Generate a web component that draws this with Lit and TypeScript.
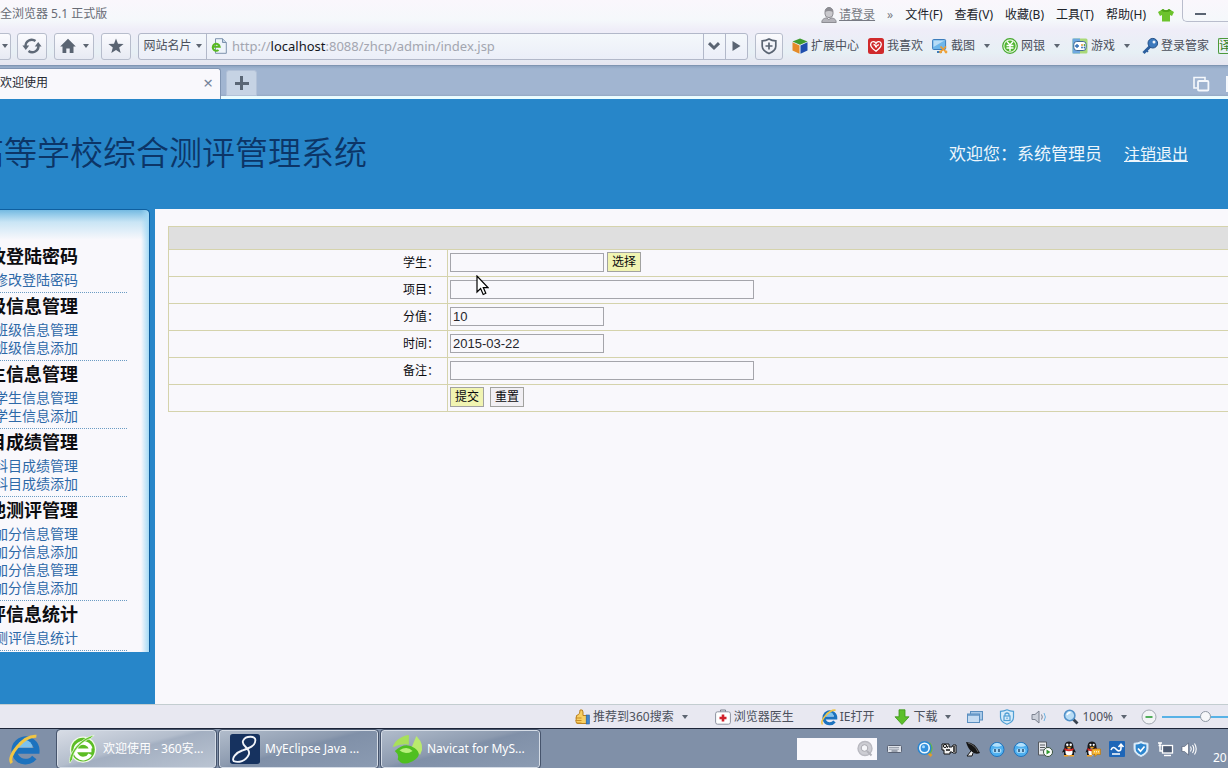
import { LitElement, html, css, svg, nothing } from "lit";
import { customElement, property } from "lit/decorators.js";

type Shape = ReturnType<typeof svg>;

const shapes: Record<string, Shape> = {
  user: svg`<path d="M4 5a4 4.6 0 0 1 8 0v2a4 3.6 0 0 1-8 0z" fill="#c9c9cd" stroke="#8d8d93"/><path d="M4 5q0-4.5 4-4.5T12 5q-4-2-8 0z" fill="#8d8d93"/><path d="M.8 15.5c0-3.6 3-4.5 5-4.5l2 1.6L10 11c2.400 0 5.200 1 5.200 4.500z" fill="#b4b4ba" stroke="#8d8d93"/>`,
  shirt: svg`<path d="M5 2q3 2.500 6 0l5 3-2 4-2-1v6.500H4V8L2 9 0 5z" fill="#6cc32c"/><path d="M5 2q3 2.500 6 0l2 1.400q-5 3.400-10 0z" fill="#4ea318"/>`,
  refresh: svg`<g fill="none" stroke="#5f6977" stroke-width="2.400"><path d="M1.600 8.500A6.200 6.200 0 0 1 11.500 3"/><path d="M14.400 7.500A6.200 6.200 0 0 1 4.500 13"/></g><path d="M-1.600 7.400h6.800L1.800 12zM10.800 8.600h6.800L14.200 4z" fill="#5f6977"/>`,
  home: svg`<path d="M8 .8 15.800 8.600h-2.300V15H9.700v-4.600H6.300V15H2.500V8.600H.2z" fill="#5a6472"/>`,
  star: svg`<path d="M8 .6l2 5.200 5.600.3-4.400 3.500 1.500 5.400L8 11.900 3.300 15l1.500-5.400L.4 6.100 6 5.800z" fill="#5a6472"/>`,
  page: svg`<path d="M4.500.7h7l3.800 3.800v10.800H4.500z" fill="#eef4fa" stroke="#7d93ad"/><path d="M11.500.7v3.800h3.800" fill="#c4d4e6" stroke="#7d93ad"/><path d="M1.700 8.800h7A3.500 3.500 0 1 0 7.500 12" fill="none" stroke="#58b822" stroke-width="2"/>`,
  down: svg`<path d="M3 5.200 8 10l5-4.800" fill="none" stroke="#5a6472" stroke-width="3"/>`,
  play: svg`<path d="M4.500 3v10L12.500 8z" fill="#5a6472"/>`,
  shield: svg`<path d="M8 .9Q11 2.700 14.800 2.800v5.400q0 4.400-6.800 7.300-6.800-2.900-6.800-7.300V2.800Q5 2.700 8 .9z" fill="none" stroke="#5a6472" stroke-width="1.700"/><path d="M8 4.500v7M4.500 8h7" stroke="#5a6472" stroke-width="1.700"/>`,
  cube: svg`<path d="M8 .4 15.500 3.400 8 6.800.5 3.400z" fill="#3f9b2f"/><path d="M.5 4.300 7.500 7.500v8.300L.5 12.400z" fill="#e58b27"/><path d="M8.500 7.500l7-3.200v8.100l-7 3.400z" fill="#1f4fae"/>`,
  heart: svg`<rect width="16" height="16" rx="2.500" fill="#d02a2c"/><path d="M8 13.300C2 9.200 2 7 3 5s4-1.800 5 .4C9 3.200 12 3 13 5s.5 4-5 8.300zM5.500 6.500q2 0 2.500 3 1-3 3-2.500" fill="none" stroke="#fff" stroke-width="1.300"/>`,
  capture: svg`<rect x=".6" y="1.500" width="13" height="10" rx="1" fill="#6db6ea" stroke="#3c7cbc"/><path d="M1.500 9 12.500 2.500H1.500z" fill="#b8dcf6"/><path d="M5 14h5" stroke="#3c7cbc" stroke-width="2"/><path d="M8.500 8.500 14 14M14 8.500 8.500 14" stroke="#ef9b2b" stroke-width="1.600"/><circle cx="8.600" cy="14" r="1.400" fill="#f0a33a"/><circle cx="14" cy="14" r="1.400" fill="#f0a33a"/>`,
  yen: svg`<circle cx="8" cy="8" r="7.300" fill="#e9f8e0" stroke="#46a82e" stroke-width="1.200"/><circle cx="8" cy="8" r="5.600" fill="#4fb52f"/><path d="M5 3.500 8 7l3-3.500M4.500 7.500h7M4.500 10h7M8 7v6" fill="none" stroke="#fff" stroke-width="1.400"/>`,
  game: svg`<rect x=".5" y=".5" width="15" height="15" rx="1.500" fill="#a9d978"/><path d="M.5.500h7.500v15H.5z" fill="#6da8e0"/><rect x="1.800" y="3.500" width="12.400" height="9" rx="3" fill="#fff" stroke="#426a94"/><path d="M3 8h4M5 6v4" stroke="#2e6db5" stroke-width="1.300"/><circle cx="10" cy="7" r=".9" fill="#e08b2b"/><circle cx="12.500" cy="7" r=".9" fill="#4da32e"/><circle cx="10" cy="9.500" r=".9" fill="#2e6db5"/><circle cx="12.500" cy="9.500" r=".9" fill="#2e6db5"/>`,
  key: svg`<path d="M9 7.500 1.500 15" stroke="#2c5f9e" stroke-width="3"/><path d="M3.500 11.500l2.500 2.500" stroke="#2c5f9e" stroke-width="1.600"/><circle cx="10.800" cy="5.200" r="4.800" fill="#3b79bd" stroke="#234f87"/><circle cx="12" cy="4" r="1.500" fill="#eef3fa"/>`,
  copy: svg`<path d="M4 12H1V1.500h11V4" fill="none" stroke="#f5f8fc" stroke-width="1.600"/><rect x="5" y="5" width="10.400" height="9.500" rx="1" fill="none" stroke="#f5f8fc" stroke-width="1.800"/>`,
  thumb: svg`<path d="M2.500 6.500C5 6 6 4 6 1q3-1 3 2v3.500h4v8H4q-2 0-2-2z" fill="#f8cf62" stroke="#b98020"/><path d="M1.500 9h6M1.500 11.500h6M2.500 14h5" stroke="#c88d26"/><rect x="12.200" y="6" width="3.200" height="9" fill="#3f86cf" stroke="#2d5f9b" stroke-width=".6"/>`,
  medic: svg`<path d="M5.500 3V1h5v2" fill="none" stroke="#777c88"/><rect x=".6" y="2.800" width="14.800" height="12.400" rx="2" fill="#fff" stroke="#8d92a0"/><path d="M8 5.500v7M4.500 9h7" stroke="#d0202a" stroke-width="2.600"/>`,
  ie: svg`<path d="M3.600 9h11.200A6 6 0 1 0 13.500 12.500" fill="none" stroke="#1c72be" stroke-width="3"/><path d="M4.500 7.200a4 4 0 0 1 8 0z" fill="#7dc2ee"/><path d="M1.500 15.500C-1.500 12 8 .5 14.600 1.200" fill="none" stroke="#f1c544" stroke-width="1.600"/>`,
  arrow: svg`<path d="M5 .8h6v7h4L8 15.500 1 7.800h4z" fill="#5cbf2a" stroke="#3b9416" stroke-width=".8"/>`,
  windows: svg`<rect x="3.500" y="2.500" width="12" height="8.500" fill="#a9c9e8" stroke="#5b8fc0"/><rect x=".5" y="5" width="12" height="8.500" fill="#c6dcf2" stroke="#5b8fc0"/><path d="M.5 6h12" stroke="#5b8fc0" stroke-width="1.400"/>`,
  lock: svg`<path d="M8 .8q3 1.500 6.500 1.500v6q0 4.500-6.500 7-6.500-2.500-6.500-7v-6Q5 2.300 8 .8z" fill="#d7ecfa" stroke="#4f9fd4" stroke-width="1.200"/><rect x="5" y="7" width="6" height="4.500" fill="none" stroke="#4f9fd4" stroke-width="1.200"/><path d="M6 7V5q2-2 4 0v2M8 8.500v1.500" fill="none" stroke="#4f9fd4" stroke-width="1.200"/>`,
  sound: svg`<path d="M1 5.500h3L8 2v12L4 10.500H1z" fill="#ccd0da" stroke="#7d8290"/><path d="M10.500 5.500q1.600 2.500 0 5" fill="none" stroke="#7d8290"/><path d="M13 4q2.800 4 0 8" fill="none" stroke="#6cb2e2"/>`,
  zoom: svg`<path d="M10 10l4.500 4.500" stroke="#39424f" stroke-width="2.800"/><circle cx="6.700" cy="6.500" r="5.200" fill="#b8dcf5" stroke="#5291c9" stroke-width="1.600"/><path d="M4 6q1-2.500 3.500-2.500" fill="none" stroke="#fff" stroke-width="1.400"/>`,
  minus: svg`<circle cx="8" cy="8" r="7" fill="#f2f4f6" stroke="#a2a9b2"/><path d="M4.500 8h7" stroke="#3fa64a" stroke-width="1.800"/>`,
  keyboard: svg`<rect x=".5" y="4.500" width="14" height="7" rx="1" fill="#dfe3ea" stroke="#596274"/><path d="M2.500 6.500h10M2.500 8.200h10" stroke="#596274" stroke-dasharray="1 1"/><path d="M4.500 10h6" stroke="#596274"/>`,
  finder: svg`<path d="M10.500 11l4 4" stroke="#e49a2d" stroke-width="2.600"/><path d="M12 2q4.500 5 .5 10" fill="none" stroke="#6abf35" stroke-width="2.400"/><circle cx="7.500" cy="7" r="6.300" fill="#f2faff" stroke="#2b86d0" stroke-width="1.600"/><circle cx="7.500" cy="7" r="3.900" fill="#3291de"/><circle cx="6.500" cy="5.800" r="1.500" fill="#a9dafa"/>`,
  camera: svg`<path d="M1 3h7v3h3l1-2h3v8h-3l-1-1H9v2H3V9H1z" fill="#f4f4f4" stroke="#111"/><circle cx="4" cy="5" r="1.600" fill="#f4f4f4" stroke="#111"/><path d="M5 9h4M13 5v6M6 6h1" stroke="#111" stroke-width="1.500"/>`,
  dish: svg`<path d="M1 1q9 0 14 11-4 2-8-1Q3 8 1 1z" fill="#151515"/><path d="M3 2q7 2 10 9" stroke="#666" fill="none"/><path d="M6 10l-4 5h5l1-3" fill="#eee" stroke="#151515"/>`,
  face: svg`<circle cx="8" cy="8.500" r="7" fill="#4fb0ef" stroke="#1f73bd"/><path d="M3 4.500Q8-1 13 4.500 8 7 3 4.500z" fill="#b3e0fb"/><rect x="3.500" y="7.500" width="9" height="4.500" rx="2.200" fill="#a6dafa"/><path d="M6 8v3M10 8v3" stroke="#12375e" stroke-width="1.300"/>`,
  server: svg`<path d="M1.500 1h8v13h-8z" fill="#e7e9ec" stroke="#55595f"/><path d="M3 4h5M3 6.500h5M3 9h5" stroke="#55595f"/><circle cx="11" cy="11" r="4.500" fill="#fff" stroke="#36513a"/><path d="M9.500 8.500v5l4-2.500z" fill="#2e9b2f"/>`,
  penguin: svg`<path d="M8 .5c4 0 4.500 4 4.500 6l2.500 5-2-.5v3H3v-3l-2 .5 2.500-5C3.500 4 4 .5 8 .5z" fill="#16181c"/><ellipse cx="8" cy="11" rx="3.600" ry="3.500" fill="#fff"/><path d="M3.500 7q4.500 2.600 9 0v2q-4.500 2.400-9 0z" fill="#d92a25"/><circle cx="6.300" cy="3.800" r="1.200" fill="#fff"/><circle cx="9.700" cy="3.800" r="1.200" fill="#fff"/><path d="M5 5.800h6L8 7.400zM3 14h4.500v1.500H3zM8.500 14H13v1.500H8.500z" fill="#f2a022"/>`,
  chat: svg`<path d="M7 .5c4 0 4.500 4 4.500 6l2 5-2-.5v3H2v-3l-1.500.5 2-5C2.500 4 3 .5 7 .5z" fill="#16181c"/><ellipse cx="6.500" cy="11" rx="3.200" ry="3.500" fill="#fff"/><path d="M2.500 7q4.500 2.600 9 0v2q-4.500 2.400-9 0z" fill="#d92a25"/><circle cx="5.500" cy="3.800" r="1.100" fill="#fff"/><circle cx="8.700" cy="3.800" r="1.100" fill="#fff"/><path d="M4 5.800h6L7 7.400zM2 14h5v1.500H2z" fill="#f2a022"/><path d="M7 8h8.500v5.500H12l-2 2v-2H7z" fill="#f7b733" stroke="#b87612" stroke-width=".7"/><path d="M9 10.800h5" stroke="#fff" stroke-dasharray="1 1"/>`,
  wave: svg`<rect width="16" height="16" rx="1" fill="#1e66b8"/><path d="M2 9c1.500-4 4-2.500 5.500-.5S12 10.500 12 7V3.500M9.500 6 12 3.200 14.500 6M3 13h8" fill="none" stroke="#fff" stroke-width="1.600"/>`,
  guard: svg`<path d="M8 .6q3.500 1.700 7 1.700v5.500q0 5-7 7.700-7-2.700-7-7.700V2.300Q4.500 2.300 8 .6z" fill="#e8f4fd" stroke="#cfe3f4"/><path d="M8 2.200q2.600 1.300 5.400 1.400v4.200q0 4-5.400 6.200-5.400-2.200-5.400-6.200V3.600Q5.400 3.500 8 2.200z" fill="#2d86cf"/><path d="M5 7.500l2.500 2.700L11.500 5.500" fill="none" stroke="#fff" stroke-width="1.700"/>`,
  network: svg`<path d="M1 2h4M3 2v8h3M1.500 4.500h3" fill="none" stroke="#fff" stroke-width="1.400"/><rect x="5.500" y="4.500" width="10" height="7.500" fill="#4f5d74" stroke="#fff" stroke-width="1.300"/><path d="M7 14.500h7" stroke="#fff" stroke-width="1.400"/>`,
  volume: svg`<path d="M1 5.500h2.500L7.500 2v12l-4-3.500H1z" fill="#fff" stroke="#4a566b" stroke-width=".6"/><path d="M9.500 5.500q1.600 2.500 0 5M11.500 4q2.600 4 0 8M13.500 2.500q3.400 5.500 0 11" fill="none" stroke="#fff" stroke-width="1.100"/>`,
  search: svg`<circle cx="8" cy="7.500" r="7" fill="#cdcdd3" stroke="#b9b9c0" stroke-width="1.400"/><circle cx="7.500" cy="7" r="3.300" fill="#f6f6f9" stroke="#a9a9b0"/><path d="M10 10l4.500 4.500" stroke="#b2b2b9" stroke-width="2"/>`,
  browser: svg`<circle cx="8" cy="8.300" r="7" fill="#f2fbe9"/><circle cx="8" cy="8.300" r="6.300" fill="#5cbd25"/><path d="M4.300 8.700h8.200M11.800 10.800A4.200 4.200 0 1 1 12.100 7.800" fill="none" stroke="#fff" stroke-width="2"/><path d="M1 15.500C-.5 11 7 1.500 14 .7L12 2.400C8 3.500 2.500 9 2.400 13.500z" fill="#62c42b" stroke="#eefbe4" stroke-width=".4"/>`,
  eclipse: svg`<rect width="16" height="16" rx="1.500" fill="#16325f"/><path d="M13.500 3.500C14 1 8.500.6 7 3.500s4.500 4 3 7.500-5.500 4.500-8 3.500C.8 13 3 10 6.500 8.800S13.500 6.500 13.500 3.500z" fill="none" stroke="#f2f5fa"/>`,
  navicat: svg`<path d="M.3 7C2 2.500 6 .8 9 .5v5.200Q5 5 .3 7z" fill="#a8e05a"/><path d="M13 1q5 5 2 10L10.500 7z" fill="#b9ea6d"/><path d="M1.500 9Q7 3.800 12 7.500T11 14.500Q5.500 17.500 3 13.500 4 11 1.500 9z" fill="#4fbf1f"/><path d="M4 8.700q4-2.500 7 .3-4 2.500-7-.3z" fill="#b7f07c"/>`,
};

@customElement("ui-icon")
class UiIcon extends LitElement {
  static styles = css`
    :host { display: inline-flex; flex: none; width: 16px; height: 16px; }
    :host([size="large"]) { width: 30px; height: 30px; }
    .art { width: 100%; height: 100%; overflow: visible; }
  `;
  @property() name = "";
  render() {
    return html`<svg class="art" viewBox="0 0 16 16" aria-hidden="true">${shapes[this.name]}</svg>`;
  }
}

const menus = ["文件(F)", "查看(V)", "收藏(B)", "工具(T)", "帮助(H)"];

const extensions = [
  { icon: "cube", label: "扩展中心", more: false },
  { icon: "heart", label: "我喜欢", more: false },
  { icon: "capture", label: "截图", more: true },
  { icon: "yen", label: "网银", more: true },
  { icon: "game", label: "游戏", more: true },
  { icon: "key", label: "登录管家", more: false },
];

const groups = [
  { title: "修改登陆密码", links: ["修改登陆密码"] },
  { title: "班级信息管理", links: ["班级信息管理", "班级信息添加"] },
  { title: "学生信息管理", links: ["学生信息管理", "学生信息添加"] },
  { title: "科目成绩管理", links: ["科目成绩管理", "科目成绩添加"] },
  { title: "其他测评管理", links: ["加分信息管理", "加分信息添加", "加分信息管理", "加分信息添加"] },
  { title: "测评信息统计", links: ["测评信息统计"] },
];

const fields = [
  { id: "student", label: "学生：", value: "", wide: false, pick: true },
  { id: "project", label: "项目：", value: "", wide: true, pick: false },
  { id: "score", label: "分值：", value: "10", wide: false, pick: false },
  { id: "date", label: "时间：", value: "2015-03-22", wide: false, pick: false },
  { id: "remark", label: "备注：", value: "", wide: true, pick: false },
];

const tasks = [
  { icon: "browser", label: "欢迎使用 - 360安...", active: true },
  { icon: "eclipse", label: "MyEclipse Java ...", active: false },
  { icon: "navicat", label: "Navicat for MyS...", active: false },
];

const tray = ["finder", "camera", "dish", "face", "face", "server", "penguin", "chat", "wave", "guard", "network", "volume"];

@customElement("app-root")
class AppRoot extends LitElement {
  static styles = css`
    :host {
      display: flex; flex-direction: column; height: 100vh; min-height: 700px; position: relative; overflow: hidden;
      font: 12px/18px "Noto Sans", "Noto Sans CJK SC", sans-serif; color: #4b505c; background: #f9f8fc; white-space: nowrap;
    }
    * { box-sizing: border-box; }
    button { font: inherit; color: inherit; background: none; border: 0; padding: 0; margin: 0; display: inline-flex; align-items: center; justify-content: center; white-space: nowrap; }
    a { color: inherit; }
    .caret { border: 3px solid transparent; border-top: 4px solid #5d6571; border-bottom: 0; flex: none; }

    .chrome { flex: none; height: 66px; background: linear-gradient(#faf7fc, #f5f8fb 20px, #efedf8 30px, #e7f0f5 52px, #e6e5f0); border-bottom: 1px solid #7f95b2; }
    .titlebar { height: 28px; display: flex; align-items: flex-start; justify-content: space-between; }
    .caption { line-height: 28px; color: #686b75; }
    .menus { display: flex; align-items: center; gap: 12px; height: 30px; color: #20232a; }
    .login { display: flex; align-items: center; gap: 2px; color: #777a83; }
    .more { color: #777a83; }
    .minimize { width: 46px; height: 22px; margin-left: -4px; align-self: flex-start; border: 1px solid #b9bdcc; border-top: 0; border-right: 0; border-radius: 0 0 0 5px; justify-content: flex-start; padding-left: 12px; }
    .minimize::after { content: ""; width: 11px; height: 2px; margin-top: 6px; background: #5a6472; }

    .toolbar { display: flex; align-items: center; gap: 7px; height: 36px; }
    .tool { height: 27px; width: 30px; border: 1px solid #b7bdcc; border-radius: 3px; background: linear-gradient(#fbfbfe, #e7eaf3); }
    .tool.stub { width: 11px; border-left: 0; border-radius: 0 3px 3px 0; margin-right: -1px; }
    .tool.home { width: 40px; gap: 7px; }
    .tool.safe { width: 28px; }
    .address { flex: 1; min-width: 0; height: 27px; display: flex; border: 1px solid #b2b8c9; border-radius: 3px; background: linear-gradient(#f4f8fb, #ebeef8); }
    .card { width: 68px; gap: 4px; border-right: 1px solid #b2b8c9; flex: none; }
    .place { flex: 1; min-width: 0; display: flex; align-items: center; gap: 5px; padding-left: 4px; font-size: 13px; color: #a3a6b0; }
    .host { color: #15171c; }
    .step { width: 22px; border-left: 1px solid #b2b8c9; }
    .extensions { flex: none; display: flex; align-items: center; gap: 9px; margin-left: 2px; }
    .extension { gap: 3px; }
    .extension .caret { margin: 0 3px 0 6px; }
    .translate { width: 10px; height: 16px; overflow: hidden; border: 1px solid #4c9a3c; border-right: 0; border-radius: 2px 0 0 2px; color: #2f7f24; justify-content: flex-start; }

    .tabs { flex: none; height: 33px; display: flex; align-items: flex-end; background: linear-gradient(#8fa5c2, #a1b5d1 3px, #a1b5d1 28px, #94a8c3 30px, #eafcff 30px); padding-bottom: 3px; }
    .tab { width: 221px; height: 31px; margin-bottom: -3px; display: flex; align-items: center; justify-content: space-between; padding-right: 7px; padding-bottom: 2px; background: #f9f8fc; border: 1px solid #8095b3; border-left: 0; border-bottom: 0; border-radius: 0 3px 0 0; color: #262a33; }
    .close { font-size: 17px; color: #75839a; line-height: 14px; }
    .add { width: 31px; height: 26px; margin-left: 5px; border: 1px solid #b3c2d8; border-radius: 3px 3px 0 0; background: #c6d3e4; }
    .plus { width: 14px; height: 14px; background: linear-gradient(#5a6675, #5a6675) center / 14px 3px no-repeat, linear-gradient(#5a6675, #5a6675) center / 3px 14px no-repeat; }
    .tabtools { margin: 0 0 4px auto; display: flex; gap: 17px; }
    .edge { width: 2px; height: 16px; background: #f5f8fc; }

    .banner { flex: none; height: 110px; background: #2786c9; display: flex; align-items: center; justify-content: space-between; padding: 0 40px 3px 0; font-family: "Noto Sans CJK SC", sans-serif; color: #eef6fc; }
    .brand { width: 367px; display: flex; justify-content: flex-end; margin: 0; padding-bottom: 4px; font-size: 33px; line-height: 40px; font-weight: 350; color: #0c3567; overflow: hidden; }
    .brandname { flex: none; }
    .session { display: flex; gap: 22px; font-size: 17px; line-height: 24px; }
    .logout { font-size: 16px; }

    .body { flex: 1; min-height: 0; display: flex; background: #2786c9; }
    .side { flex: none; width: 150px; margin-right: 5px; align-self: flex-start; overflow: hidden; padding-top: 33px; padding-bottom: 1px; border: 1px solid #0f5f9f; border-left: 0; border-bottom: 0; border-radius: 0 5px 0 0;
      background: linear-gradient(to right, #f9f8fc00 141px, #a4daf5 149px), linear-gradient(#74bae2, #c9e5f5 12px, #f9f8fc 30px); }
    .group { width: 127px; border-bottom: 1px dotted #6b9cc4; padding: 0 49px 4px 0; display: flex; flex-direction: column; align-items: flex-end; font-family: "Noto Sans CJK SC", sans-serif; }
    .grouptitle { margin: 0 0 3px; font-size: 18px; line-height: 24px; color: #0c0c10; font-weight: 700; }
    .link { font-size: 14px; line-height: 18px; color: #2e69a8; text-decoration: none; }

    .content { flex: 1; min-width: 0; background: #f9f8fc; padding: 17px 0 0 13px; }
    .sheet { width: 100%; border-collapse: collapse; table-layout: fixed; color: #0b0b0f; font: 12px/18px "Noto Sans CJK SC", sans-serif; }
    .sheet td, .sheet th { border: 1px solid #d5d3ac; border-right: 0; height: 27px; padding: 0 2px 2px; text-align: left; font-weight: 400; }
    .sheet .head { height: 23px; background: #dfdfdf; }
    .sheet .name { width: 279px; text-align: right; padding-right: 8px; }
    .line { display: flex; align-items: center; gap: 3px; }
    .line.actions { gap: 6px; }
    .text { width: 154px; height: 19px; border: 1px solid #a5a5ab; border-radius: 0; background: transparent; padding: 0 2px; margin: 0; font: 13px/16px "Liberation Sans", sans-serif; color: #26262c; outline: 0; }
    .text.wide { width: 304px; }
    .push { width: 34px; height: 20px; border: 1px solid #a2a2a0; background: #f1f4b2; padding-bottom: 2px; }
    .push.plain { background: #f1eff3; }

    .status { flex: none; height: 24px; display: flex; align-items: center; justify-content: flex-end; gap: 16px; background: #e8e8f1; border-top: 1px solid #c3cdd0; }
    .item { gap: 3px; }
    .item .caret { margin-left: 5px; }
    .item.spaced { margin-right: 11px; }
    .item.near { margin-right: 4px; }
    .zoomer { flex: none; width: 87px; display: flex; align-items: center; gap: 5px; overflow: hidden; margin-left: -2px; }
    .range { appearance: none; flex: none; width: 86px; height: 14px; margin: 0; background: linear-gradient(#58b2e6, #58b2e6) center / 100% 2px no-repeat; }
    .range::-webkit-slider-thumb { appearance: none; width: 11px; height: 11px; border-radius: 50%; background: #f6f7f9; border: 1px solid #8f98a4; }

    .taskbar { flex: none; height: 40px; display: flex; align-items: center; background: #8090a8; border-top: 1px solid #1c2438; color: #fff; }
    .launch { width: 57px; height: 38px; padding-right: 9px; }
    .tasks { display: flex; gap: 3px; }
    .task { width: 159px; height: 38px; justify-content: flex-start; gap: 5px; padding-left: 10px; border: 1px solid #d5dce6; outline: 1px solid #46546c; outline-offset: 0; border-radius: 3px; background: linear-gradient(165deg, #b1bccb, #8c9aaf 45%, #8090a8 50%, #8b9bb2); color: #fff; }
    .task.active { background: linear-gradient(165deg, #d7dce5, #b3bdcc 45%, #a3afc1 50%, #bac4d2); }
    .search { margin-left: auto; width: 80px; height: 22px; display: flex; align-items: center; background: #f9f8fc; padding-right: 4px; }
    .query { flex: 1; min-width: 0; border: 0; background: none; outline: 0; padding: 0 4px; font: inherit; }
    .tray { display: flex; align-items: center; gap: 8px; margin-left: 10px; }
    .tray .first { margin-right: 6px; }
    .clock { align-self: flex-end; margin-left: 16px; width: 15px; overflow: hidden; line-height: 20px; }

    .pointer { position: absolute; left: 476px; top: 275px; width: 13px; height: 21px; pointer-events: none; }
  `;

  render() {
    return html`
      <header class="chrome">
        <div class="titlebar">
          <span class="caption">全浏览器 5.1 正式版</span>
          <nav class="menus">
            <a class="login" href="#"><ui-icon name="user"></ui-icon>请登录</a>
            <span class="more">»</span>
            ${menus.map((m) => html`<button>${m}</button>`)}
            <ui-icon name="shirt"></ui-icon>
            <button class="minimize" aria-label="最小化"></button>
          </nav>
        </div>
        <div class="toolbar">
          <button class="tool stub" aria-label="前进"><span class="caret"></span></button>
          <button class="tool" aria-label="刷新"><ui-icon name="refresh"></ui-icon></button>
          <button class="tool home" aria-label="主页"><ui-icon name="home"></ui-icon><span class="caret"></span></button>
          <button class="tool" aria-label="收藏"><ui-icon name="star"></ui-icon></button>
          <div class="address">
            <button class="card">网站名片<span class="caret"></span></button>
            <div class="place"><ui-icon name="page"></ui-icon><span>http://<span class="host">localhost</span>:8088/zhcp/admin/index.jsp</span></div>
            <button class="step" aria-label="历史"><ui-icon name="down"></ui-icon></button>
            <button class="step" aria-label="转到"><ui-icon name="play"></ui-icon></button>
          </div>
          <button class="tool safe" aria-label="安全"><ui-icon name="shield"></ui-icon></button>
          <div class="extensions">
            ${extensions.map((e) => html`<button class="extension"><ui-icon name=${e.icon}></ui-icon>${e.label}${e.more ? html`<span class="caret"></span>` : nothing}</button>`)}
            <button class="translate">译</button>
          </div>
        </div>
      </header>
      <div class="tabs">
        <div class="tab"><span>欢迎使用</span><button class="close" aria-label="关闭">×</button></div>
        <button class="add" aria-label="新标签"><span class="plus"></span></button>
        <div class="tabtools"><ui-icon name="copy"></ui-icon><span class="edge"></span></div>
      </div>
      <div class="banner">
        <h1 class="brand"><span class="brandname">高等学校综合测评管理系统</span></h1>
        <div class="session"><span>欢迎您：系统管理员</span><a class="logout" href="#">注销退出</a></div>
      </div>
      <div class="body">
        <nav class="side">
          ${groups.map((g) => html`<section class="group">
            <h2 class="grouptitle">${g.title}</h2>
            ${g.links.map((l) => html`<a class="link" href="#">${l}</a>`)}
          </section>`)}
        </nav>
        <main class="content">
          <form @submit=${(e: Event) => e.preventDefault()}>
            <table class="sheet">
              <colgroup><col class="name" /><col /></colgroup>
              <tr><th class="head" colspan="2"></th></tr>
              ${fields.map((f) => html`<tr>
                <td class="name"><label for=${f.id}>${f.label}</label></td>
                <td><div class="line">
                  <input id=${f.id} class="text ${f.wide ? "wide" : ""}" type="text" .value=${f.value} />
                  ${f.pick ? html`<button type="button" class="push">选择</button>` : nothing}
                </div></td>
              </tr>`)}
              <tr>
                <td class="name"></td>
                <td><div class="line actions"><button type="submit" class="push">提交</button><button type="reset" class="push plain">重置</button></div></td>
              </tr>
            </table>
          </form>
        </main>
      </div>
      <footer class="status">
        <button class="item spaced"><ui-icon name="thumb"></ui-icon>推荐到360搜索<span class="caret"></span></button>
        <button class="item spaced"><ui-icon name="medic"></ui-icon>浏览器医生</button>
        <button class="item near"><ui-icon name="ie"></ui-icon>IE打开</button>
        <button class="item"><ui-icon name="arrow"></ui-icon>下载<span class="caret"></span></button>
        <button aria-label="窗口"><ui-icon name="windows"></ui-icon></button>
        <button aria-label="隐私"><ui-icon name="lock"></ui-icon></button>
        <button aria-label="静音"><ui-icon name="sound"></ui-icon></button>
        <button class="item"><ui-icon name="zoom"></ui-icon>100%<span class="caret"></span></button>
        <div class="zoomer"><button aria-label="缩小"><ui-icon name="minus"></ui-icon></button><input class="range" type="range" aria-label="缩放" min="0" max="200" value="100" /></div>
      </footer>
      <div class="taskbar">
        <button class="launch" aria-label="Internet Explorer"><ui-icon name="ie" size="large"></ui-icon></button>
        <div class="tasks">
          ${tasks.map((t) => html`<button class="task ${t.active ? "active" : ""}"><ui-icon name=${t.icon} size="large"></ui-icon>${t.label}</button>`)}
        </div>
        <div class="search"><input class="query" type="text" aria-label="搜索" /><ui-icon name="search"></ui-icon></div>
        <div class="tray">
          <ui-icon class="first" name="keyboard"></ui-icon>
          ${tray.map((n) => html`<ui-icon name=${n}></ui-icon>`)}
        </div>
        <span class="clock">20</span>
      </div>
      <svg class="pointer" viewBox="0 0 13 21" aria-hidden="true"><path d="M1 1v16l3.600-3.400L7.200 19.500l2.600-1.200L7.300 12.600H12z" fill="#fff" stroke="#000" stroke-width="1.200"/></svg>
    `;
  }
}
